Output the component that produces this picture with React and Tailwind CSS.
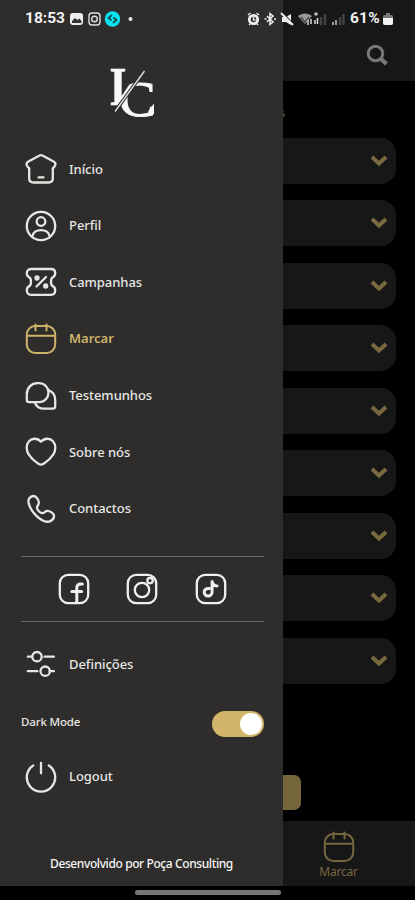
const stroke = {
  fill: "none",
  stroke: "currentColor",
  strokeWidth: 2.3,
  strokeLinecap: "round",
  strokeLinejoin: "round",
};

function Icon({ children, className = "" }) {
  return (
    <svg viewBox="0 0 32 32" className={`h-8 w-8 shrink-0 ${className}`} {...stroke}>
      {children}
    </svg>
  );
}

const HomeIcon = () => (
  <Icon>
    <path d="M14.6 2.5 3.400 8.600c-1.800 1-2.300 2.400-1.400 4.200.6 1.200 1.700 1.900 2.200 2.400v10c0 2.600 1.400 4.300 4.300 4.300h15c2.900 0 4.300-1.700 4.300-4.300v-10c.5-.5 1.600-1.200 2.200-2.400.9-1.800.4-3.200-1.400-4.200L17.400 2.500a2.600 2.600 0 0 0-2.800 0Z" />
    <path d="M13.500 24.300h5" />
  </Icon>
);

const ProfileIcon = () => (
  <Icon>
    <circle cx="16" cy="16" r="14.200" />
    <circle cx="16" cy="11.500" r="4.300" />
    <path d="M7.200 26.500c1-4 4.600-6.300 8.800-6.300s7.800 2.300 8.800 6.300" />
  </Icon>
);

const CampaignIcon = () => (
  <Icon>
    <path d="M6 3h20c2.800 0 4.200 1.700 4.200 4.300 0 2.400-.8 3.200-2.400 4-2.400 1.200-2.400 7.600 0 8.800 1.600.8 2.400 1.800 2.400 4.200 0 2.600-1.400 4.500-4.200 4.500H6c-2.800 0-4.200-1.900-4.200-4.500 0-2.400.8-3.400 2.400-4.200 2.400-1.200 2.400-7.600 0-8.800-1.600-.8-2.400-1.600-2.400-4C1.800 4.700 3.200 3 6 3Z" />
    <path d="m11.500 20.500 9.500-9.500" />
    <circle cx="12" cy="12" r="1.500" fill="currentColor" />
    <circle cx="20.700" cy="20" r="1.500" fill="currentColor" />
  </Icon>
);

const CalendarIcon = ({ className }) => (
  <Icon className={className}>
    <rect x="1.800" y="3" width="28.400" height="27" rx="8.500" strokeWidth="2" />
    <path d="M2 12.800h28M10.500 1.500v6M21.500 1.500v6" strokeWidth="2" />
  </Icon>
);

const ChatIcon = () => (
  <Icon>
    <path d="M12.500 3.200h1.200c6 0 9.800 4.300 9.800 9.300 0 5.200-4 9.600-9.600 9.600H4.200c-1.600 0-2.400-.8-2.400-2.400v-5.500c0-6.300 4.500-11 10.700-11Z" />
    <path d="M23.300 10.200c4.300 1.500 6.900 5 6.900 9.800v6.200c0 1.600-.8 2.400-2.400 2.400h-8.600c-4.600 0-8-2-9.400-6.300" />
  </Icon>
);

const HeartIcon = () => (
  <Icon>
    <path d="M16 5.700C19.500 1.800 25 1.900 28 5.300c3.200 3.700 2.900 9.300.2 13.300-2.300 3.500-6 6.900-9.600 9.200-1.800 1.100-3.400 1.100-5.200 0-3.600-2.300-7.300-5.700-9.600-9.200C1.100 14.600.8 9 4 5.300c3-3.400 8.500-3.500 12 .4Z" />
  </Icon>
);

const PhoneIcon = () => (
  <Icon>
    <path d="M4.200 5.500c1-1.500 2.700-2.600 4.600-2.500 2.500.1 5 4.200 5.100 6.700.1 2-2 3.200-1.900 5 .1 2.300 3.100 5.300 5.500 5.500 1.900.1 2.700-2.300 4.800-2.300 2.500 0 6.600 2.300 6.700 5 .1 2.200-1.700 4.300-3.600 5.200-3.900 1.800-9.900-1.200-14.700-6C6 17.400 1.700 9.400 4.200 5.500Z" />
  </Icon>
);

const SettingsIcon = () => (
  <Icon>
    <path d="M2.800 8.700h3.400M19.600 8.700h9.300M2.800 23.200h9.600M24.600 23.200h4.300" />
    <circle cx="12" cy="8.700" r="4.700" />
    <circle cx="20.200" cy="23.200" r="4.700" />
  </Icon>
);

const PowerIcon = () => (
  <Icon>
    <path d="M8.200 4.500a14.200 14.200 0 1 0 15.600 0M16 1.800v10.500" />
  </Icon>
);

const FacebookIcon = () => (
  <Icon>
    <rect x="1.800" y="1.800" width="28.400" height="28.400" rx="8.500" />
    <path d="M24.300 11h-1.500c-2.600 0-4 1.500-4 4v14.500M13.800 18.500h9.800" strokeWidth="3" />
  </Icon>
);

const InstagramIcon = () => (
  <Icon>
    <rect x="1.800" y="1.800" width="28.400" height="28.400" rx="8.500" />
    <circle cx="16" cy="17" r="7.200" />
    <circle cx="24" cy="7.600" r="2.700" />
  </Icon>
);

const TiktokIcon = () => (
  <Icon>
    <rect x="1.800" y="1.800" width="28.400" height="28.400" rx="8.500" />
    <path d="M14.300 15.500c-3-.5-5.100 1.300-5.100 3.700 0 2.300 1.700 3.900 3.900 3.900s4-1.700 4-4V8.500c.5 2.800 2.300 4.300 5 4.500" strokeWidth="3" />
  </Icon>
);

const links = [
  { label: "Início", icon: HomeIcon },
  { label: "Perfil", icon: ProfileIcon },
  { label: "Campanhas", icon: CampaignIcon },
  { label: "Marcar", icon: CalendarIcon, active: true },
  { label: "Testemunhos", icon: ChatIcon },
  { label: "Sobre nós", icon: HeartIcon },
  { label: "Contactos", icon: PhoneIcon },
];

function MenuItem({ label, icon: ItemIcon, active }) {
  return (
    <a
      className={`flex h-[56.6px] items-center gap-3 text-[13px] ${
        active ? "font-semibold text-[#cdb36a]" : "font-medium tracking-[-0.05px] text-[#e6e6e4]"
      }`}
    >
      <ItemIcon />
      {label}
    </a>
  );
}

function Logo() {
  return (
    <svg viewBox="0 0 48 52" className="h-[52px] w-12" fill="#f8f8f6">
      <clipPath id="left">
        <path d="M0 0H36L3 48H0Z" />
      </clipPath>
      <clipPath id="right">
        <path d="M33 0H48V52H5V42Z" />
      </clipPath>
      <g fontFamily="Liberation Serif, serif" stroke="#f8f8f6">
        <text x="1.500" y="38" fontSize="55" fontWeight="bold" textLength="17" lengthAdjust="spacingAndGlyphs" clipPath="url(#left)" strokeWidth=".5">
          I
        </text>
        <text x="11" y="48.500" fontSize="51" textLength="36.500" lengthAdjust="spacingAndGlyphs" clipPath="url(#right)" strokeWidth="1.200">
          C
        </text>
      </g>
      {/* lower serif of the C */}
      <path d="M46 36.500v11l-6-3Z" />
      <path d="M36.500 4 7 44.500" stroke="#2e2d2b" strokeWidth="3.500" />
      <path d="M36.500 4 7 44.500" stroke="#e4e4e2" strokeWidth="1.300" />
    </svg>
  );
}

function StatusBar() {
  return (
    <div className="absolute inset-x-0 top-0 flex h-[38px] items-center pr-[22px] pl-[25px] text-[#f2f2f2]">
      <span className="w-[41px] font-[Roboto,sans-serif] text-[15.5px] font-bold">18:53</span>
      <svg width="70" height="18" viewBox="0 0 70 18" className="ml-1">
        <rect x="0" y="3" width="13" height="12" rx="3" fill="#eee" />
        <path d="m2 11 3-3 2.500 2 2-1.500 2 2.500v2H2Z" fill="#333" />
        <g fill="none" stroke="#ddd" strokeWidth="1.400">
          <rect x="19" y="3" width="11" height="12" rx="3" />
          <circle cx="24.500" cy="9" r="2.800" />
        </g>
        <circle cx="42.500" cy="9" r="7.700" fill="#08e4ef" />
        <path d="m42 5-3.500 3 3 2.500M43 13l3.500-3-3-2.500" fill="none" stroke="#17494d" strokeWidth="1.800" />
        <circle cx="60.500" cy="9" r="2" fill="#eee" />
      </svg>
      <svg width="102" height="18" viewBox="0 0 102 18" className="ml-auto">
        <g fill="none" stroke="#eee" strokeWidth="1.500">
          <circle cx="6.500" cy="9.500" r="4.200" strokeWidth="2.800" />
          <path d="M6.500 7v3h2M1 5l2.500-2M12 5 9.500 3M2 15l1-1M11 15l-1-1" />
          <path d="m20 6 6 6-3 2.500v-11l3 2.500-6 6M17.500 9h2M27 9h2" />
        </g>
        <path d="M35 7h4l5-3v11l-5-3h-4Z" fill="#eee" />
        <path d="m35 2 11 12" stroke="#222" strokeWidth="1.600" />
        <path d="m34 3 12 12" stroke="#eee" strokeWidth="1.800" />
        <path d="M51 6c4-3.500 10-3.500 14 0l-7 8Z" fill="#999" />
        <path d="m54 7 4 5 4-5" fill="none" stroke="#444" strokeWidth="1.300" />
        <path d="M61 10v5M64 9v5" stroke="#ddd" strokeWidth="1.500" />
        <path d="M68 14v-4M70.500 14V8" stroke="#ddd" strokeWidth="1.500" />
        <circle cx="69" cy="4" r="1.800" fill="#bbb" />
        <path d="M74 15V7M78 15V4" stroke="#444" strokeWidth="2.400" />
        <path d="M86 15v-3M89 15v-5" stroke="#999" strokeWidth="2" />
        <path d="M93 15V7M96.500 15V4" stroke="#444" strokeWidth="2.400" />
      </svg>
      <span className="ml-px w-[33px] font-[Roboto,sans-serif] text-[15.5px] font-bold tracking-[0.2px]">61%</span>
      <svg width="10" height="14" viewBox="0 0 10 14">
        <path d="M3 1h4v2h1.500Q10 3 10 5v6q0 2-2 2H2q-2 0-2-2V5q0-2 1.500-2H3Z" fill="#777" />
        <path d="M0 6h10v5q0 2-2 2H2q-2 0-2-2Z" fill="#f2f2f2" />
      </svg>
    </div>
  );
}

function Drawer() {
  return (
    <aside className="flex w-[283px] shrink-0 flex-col bg-[#2e2d2b] pt-[67px]">
      <div className="flex h-[74px] items-start pl-[108px]">
        <Logo />
      </div>
      <nav className="flex flex-col pl-[25px]">
        {links.map((link) => (
          <MenuItem key={link.label} {...link} />
        ))}
      </nav>

      <div className="mt-[19px] mr-[19px] ml-[21px] flex h-[66px] items-center justify-between border-y border-[#6b6a68] pr-[37px] pl-[36.5px] text-[#f0efed]">
        <FacebookIcon />
        <InstagramIcon />
        <TiktokIcon />
      </div>

      <div className="mt-[14px] pl-[25px]">
        <MenuItem label="Definições" icon={SettingsIcon} />
      </div>
      <div className="flex h-[56px] items-center justify-between pt-[3px] pr-[19px] pl-[21px]">
        <span className="pb-0.5 text-[11.5px] font-medium tracking-[-0.15px] text-[#e6e6e4]">Dark Mode</span>
        <span className="mt-1 flex h-[26px] w-[52px] items-center justify-end rounded-full bg-[#d2b56b] pr-0.5">
          <span className="h-[22px] w-[22px] rounded-full bg-white" />
        </span>
      </div>
      <div className="pl-[25px]">
        <MenuItem label="Logout" icon={PowerIcon} />
      </div>
      <p className="mt-auto pb-[13px] text-center text-[12px] leading-[18px] font-medium tracking-[-0.4px] whitespace-nowrap text-[#f5f5f3]">
        Desenvolvido por Poça Consulting
      </p>
    </aside>
  );
}

function Page() {
  return (
    <main className="flex min-w-0 flex-1 flex-col bg-black">
      <header className="flex h-[81px] shrink-0 items-end justify-end bg-[#171717] pr-[27px] pb-[15px]">
        <svg viewBox="0 0 22 22" className="h-[22px] w-[22px]" fill="none" stroke="#777777">
          <circle cx="9.500" cy="9.500" r="7.300" strokeWidth="3" />
          <path d="m14 14 6.500 6" strokeWidth="4.400" />
        </svg>
      </header>
      <div className="flex h-[56.5px] items-center pt-1.5">
        <span className="flex w-0.5 justify-end overflow-hidden text-[13px] text-[#666666]">s</span>
      </div>
      <div className="flex flex-col gap-[16.5px] pr-[19px]">
        {Array.from({ length: 9 }, (_, i) => (
          <div key={i} className="flex h-[46px] items-center justify-end rounded-r-[15px] bg-[#171717] pr-2">
            <svg viewBox="0 0 18 14" className="h-3.5 w-[18px]">
              <path d="m2 3 7 6.500L16 3" fill="none" stroke="#786a3e" strokeWidth="4" />
            </svg>
          </div>
        ))}
      </div>
      <div className="mt-auto mb-[11px] h-[35px] w-[18px] rounded-r-[7px] bg-[#74653b]" />
      <footer className="flex h-[65px] shrink-0 flex-col items-center bg-[#171717] pt-[10px] pr-[21px] text-[12px] leading-[18px] tracking-[-0.2px] text-[#75673e]">
        <CalendarIcon />
        Marcar
      </footer>
    </main>
  );
}

export default function App() {
  return (
    <div className="relative flex h-[900px] w-[415px] flex-col overflow-hidden bg-black font-['Noto_Sans',sans-serif]">
      <div className="flex h-[885.5px]">
        <Drawer />
        <Page />
      </div>
      <div className="flex flex-1 items-center pl-[135px]">
        <div className="h-[5px] w-[146px] rounded-full bg-[#777777]" />
      </div>
      <StatusBar />
    </div>
  );
}
